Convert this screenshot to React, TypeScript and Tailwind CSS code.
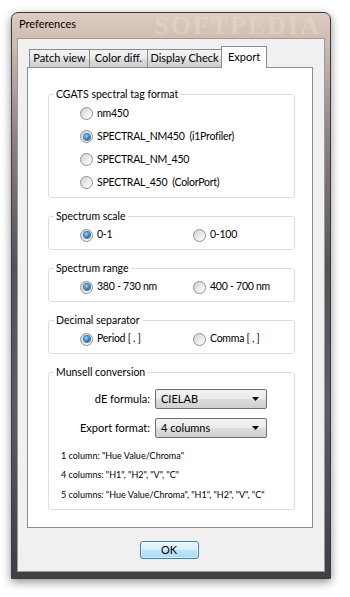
import type { ReactNode } from "react";

const ui = "font-['Lato','Open_Sans',sans-serif]";

function Radio({ checked = false }: { checked?: boolean }) {
  return (
    <span className="flex h-[13px] w-[13px] shrink-0 items-center justify-center rounded-full border border-[#8e8f8f] bg-[linear-gradient(135deg,#d0d0d0,#f4f4f4_70%,#ffffff)]">
      {checked ? (
        <span className="h-[6px] w-[6px] rounded-full bg-[radial-gradient(circle_at_40%_35%,#9fd8f5,#1f74b4_60%,#134f80)] shadow-[0_0_0_1px_#4a7fa6]" />
      ) : null}
    </span>
  );
}

function Option({ label, checked, className = "" }: { label: string; checked?: boolean; className?: string }) {
  return (
    <label className={`flex items-center gap-[4px] ${className}`}>
      <Radio checked={checked} />
      <span className="whitespace-pre text-[10.5px] tracking-[-0.25px]">{label}</span>
    </label>
  );
}

function Group({ title, children }: { title: string; children: ReactNode }) {
  return (
    <fieldset className="w-[247px] rounded-[3px] border border-[#d5dfe5]">
      <legend className="ml-[5px] px-[2px] text-[10.5px] leading-[16px]">{title}</legend>
      {children}
    </fieldset>
  );
}

function Select({ value }: { value: string }) {
  return (
    <div className="flex h-[20px] w-[112px] items-center justify-between rounded-[2px] border border-[#707070] bg-[linear-gradient(#f2f2f2,#ebebeb_50%,#dddddd_51%,#cfcfcf)] pl-[5px] pr-[7px] text-[11px]">
      <span>{value}</span>
      <svg width="7" height="4" viewBox="0 0 7 4">
        <path d="M0 0h7L3.5 4z" fill="#000" />
      </svg>
    </div>
  );
}

const tabs = [
  { label: "Patch view", w: "w-[61px]" },
  { label: "Color diff.", w: "w-[59px]" },
  { label: "Display Check", w: "w-[75px]" },
];

export default function App() {
  return (
    <div className={`h-[597px] w-[350px] overflow-hidden bg-white pl-[11px] pt-[12px] text-[10.5px] text-black ${ui}`}>
      <div className="flex h-[567px] w-[320px] flex-col rounded-t-[7px] border border-[#3a3a42] bg-[linear-gradient(#ddccc1,#cdb9ad_6%,#8d8185_22%,#55525a_45%,#5d5b63_70%,#3f3e46)] px-[5px] pb-[6px] shadow-[0_3px_10px_rgba(0,0,0,0.45)]">
        <div className="flex h-[25px] items-center justify-between pl-[2px] pr-[4px]">
          <span className="pb-[2px] text-[11px]">Preferences</span>
          <span className="font-['Liberation_Serif',serif] text-[26px] font-bold tracking-[2px] text-[#e4d7ce]/60">SOFTPEDIA</span>
        </div>

        <div className="flex flex-1 flex-col border border-[#9a9a9a] bg-[#f0f0f0] pl-[9px] pr-[11px] pt-[7px]">
          <div className="flex h-[21px] items-end pl-[2px]">
            {tabs.map((t) => (
              <div
                key={t.label}
                className={`-mr-px flex h-[18px] ${t.w} items-center justify-center whitespace-nowrap border border-b-0 border-[#898c95] bg-[linear-gradient(#f3f3f3,#ebebeb_50%,#dddddd_51%,#cfcfcf)] pb-[1px] text-[11px]`}
              >
                {t.label}
              </div>
            ))}
            <div className="relative z-10 -mb-px flex h-[22px] w-[46px] items-start justify-center border border-b-0 border-[#898c95] bg-white pt-[2px] text-[11px]">
              Export
            </div>
          </div>

          <div className="flex h-[461px] flex-col gap-[10px] border border-[#898c95] bg-white pl-[20px] pt-[18px]">
            <Group title="CGATS spectral tag format">
              <div className="flex flex-col pb-[3px] pl-[31px]">
                <Option label="nm450" className="h-[23px]" />
                <Option label="SPECTRAL_NM450  (i1Profiler)" checked className="h-[23px]" />
                <Option label="SPECTRAL_NM_450" className="h-[23px]" />
                <Option label="SPECTRAL_450  (ColorPort)" className="h-[23px]" />
              </div>
            </Group>

            <Group title="Spectrum scale">
              <div className="mb-[3px] flex h-[22px] pl-[31px]">
                <Option label="0-1" checked className="w-[113px]" />
                <Option label="0-100" />
              </div>
            </Group>

            <Group title="Spectrum range">
              <div className="mb-[3px] flex h-[22px] pl-[31px]">
                <Option label="380 - 730 nm" checked className="w-[113px]" />
                <Option label="400 - 700 nm" />
              </div>
            </Group>

            <Group title="Decimal separator">
              <div className="mb-[3px] flex h-[22px] pl-[31px]">
                <Option label="Period [ . ]" checked className="w-[113px]" />
                <Option label="Comma [ , ]" />
              </div>
            </Group>

            <Group title="Munsell conversion">
              <div className="mt-[9px] flex flex-col gap-[9px] text-[11px]">
                <div className="flex items-center gap-[5px]">
                  <span className="w-[101px] text-right">dE formula:</span>
                  <Select value="CIELAB" />
                </div>
                <div className="flex items-center gap-[5px]">
                  <span className="w-[101px] text-right">Export format:</span>
                  <Select value="4 columns" />
                </div>
              </div>
              <div className="mb-[5px] mt-[8px] flex flex-col pl-[12px] text-[9px]">
                <span className="h-[19px] leading-[19px]">1 column: "Hue Value/Chroma"</span>
                <span className="h-[20px] leading-[20px]">4 columns: "H1", "H2", "V", "C"</span>
                <span className="h-[19px] leading-[19px]">5 columns: "Hue Value/Chroma", "H1", "H2", "V", "C"</span>
              </div>
            </Group>
          </div>

          <div className="flex justify-center pr-[2px] pt-[13px]">
            <button
              type="button"
              className="h-[18px] w-[59px] rounded-[3px] border border-[#3c7fb1] bg-[linear-gradient(#eaf6fd,#d9f0fc_50%,#bee6fd_51%,#a7d9f5)] text-[11px] leading-[14px] shadow-[inset_0_0_0_1px_rgba(255,255,255,0.6)]"
            >
              OK
            </button>
          </div>
        </div>
      </div>
    </div>
  );
}
